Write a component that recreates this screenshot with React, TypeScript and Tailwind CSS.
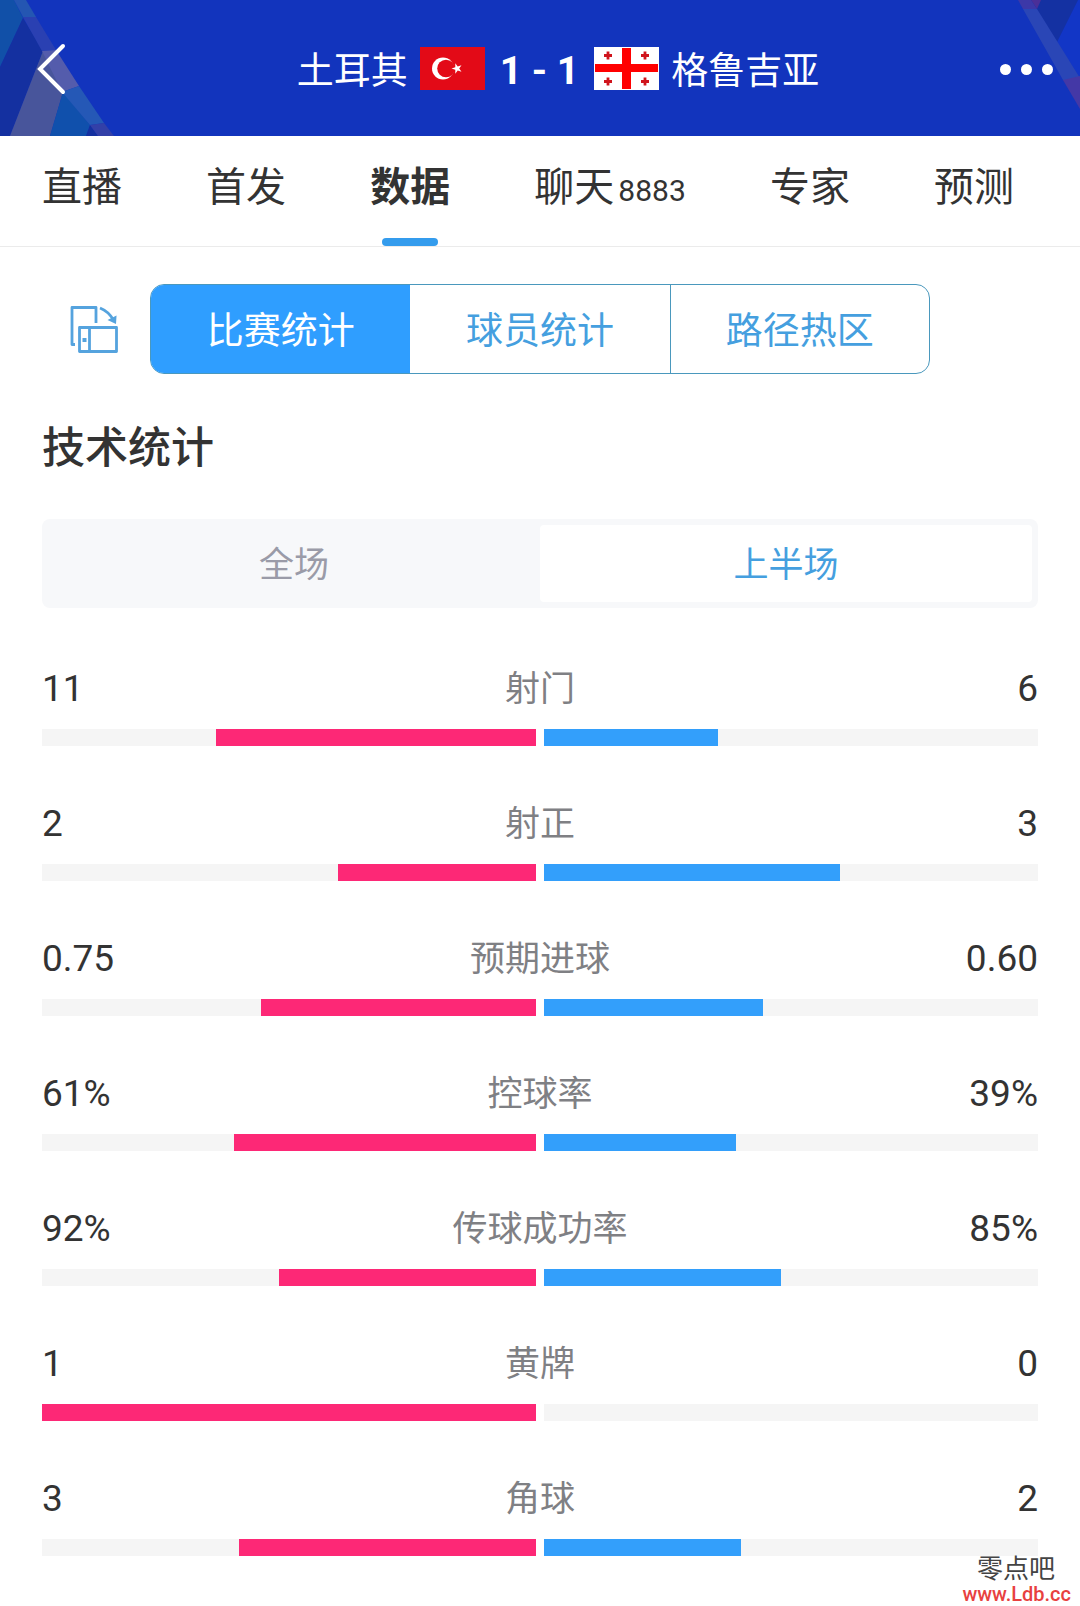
const tabs = [
  { label: "直播" },
  { label: "首发" },
  { label: "数据", active: true },
  { label: "聊天", count: "8883" },
  { label: "专家" },
  { label: "预测" },
];

const stats = [
  { label: "射门", home: "11", away: "6", homeShare: 64.7, awayShare: 35.3 },
  { label: "射正", home: "2", away: "3", homeShare: 40, awayShare: 60 },
  { label: "预期进球", home: "0.75", away: "0.60", homeShare: 55.6, awayShare: 44.4 },
  { label: "控球率", home: "61%", away: "39%", homeShare: 61.1, awayShare: 38.9 },
  { label: "传球成功率", home: "92%", away: "85%", homeShare: 52, awayShare: 48 },
  { label: "黄牌", home: "1", away: "0", homeShare: 100, awayShare: 0 },
  { label: "角球", home: "3", away: "2", homeShare: 60.2, awayShare: 39.8 },
];

function HeaderArtLeft() {
  return (
    <svg className="absolute left-0 top-0" width="116" height="136" viewBox="0 0 116 136" aria-hidden="true">
      <path d="M0 0H14L23 18L0 67Z" fill="#1150a8" />
      <path d="M23 18L43 51L10 136H0V67Z" fill="#1430a0" />
      <path d="M43 51L63 92L50 136H10Z" fill="#48559b" />
      <path d="M63 92L90 125L86 136H50Z" fill="#1050ac" />
      <path d="M90 125L98 136H86Z" fill="#1430a0" />
      <path d="M14 0H26L36 17H23Z" fill="#2456b2" />
      <path d="M23 17H36L56 50L42 51Z" fill="#2a40b2" />
      <path d="M42 51L56 50L79 86L62 92Z" fill="#545cac" />
      <path d="M62 92L79 86L104 123L90 125Z" fill="#2558b6" />
      <path d="M90 125L104 123L114 136H98Z" fill="#3340a8" />
    </svg>
  );
}

function HeaderArtRight() {
  return (
    <svg className="absolute right-0 top-0" width="64" height="136" viewBox="0 0 64 136" aria-hidden="true">
      <path d="M62 0H64V78L41 42Z" fill="#1236c6" />
      <path d="M15 0H62L41 42Z" fill="#1431a2" />
      <path d="M15 0H25L21 9Z" fill="#4a2f98" />
      <path d="M2 0H15L21 9H7Z" fill="#3c38a8" />
      <path d="M7 9H21L64 78L53 80L47 80Z" fill="#2a46b6" />
      <path d="M47 80L64 76V109Z" fill="#4438a6" />
    </svg>
  );
}

function TurkeyFlag() {
  return (
    <svg width="65" height="43" viewBox="0 0 65 43" role="img" aria-label="土耳其">
      <rect width="65" height="43" fill="#e30a17" />
      <circle cx="23" cy="21.500" r="11" fill="#fff" />
      <circle cx="26" cy="21.500" r="8.800" fill="#e30a17" />
      <path d="M31.500 21.500L35.300 20.200L35.300 16.200L37.700 19.400L41.500 18.200L39.200 21.500L41.500 24.800L37.700 23.600L35.300 26.800L35.300 22.800Z" fill="#fff" />
    </svg>
  );
}

function GeorgiaFlag() {
  return (
    <svg width="65" height="43" viewBox="0 0 65 43" role="img" aria-label="格鲁吉亚">
      <rect width="65" height="43" fill="#fff" />
      <path d="M28 1H37V17H64V25H37V42H28V25H1V17H28Z" fill="#ff0000" />
      <path
        d="M10 8.500H18M14 4.500V12.500M47 8.500H55M51 4.500V12.500M10 34.500H18M14 30.500V38.500M47 34.500H55M51 30.500V38.500"
        stroke="#d0141c"
        strokeWidth="2.800"
      />
    </svg>
  );
}

function RotateIcon() {
  return (
    <svg width="50" height="50" viewBox="0 0 50 50" fill="none" stroke="#55a3de" strokeWidth="2.800" strokeLinejoin="round" aria-hidden="true">
      <path d="M6 40.500H3V3.500H27V19" />
      <rect x="10.500" y="23.500" width="37" height="24" />
      <path d="M20.500 23.500V47.500" />
      <path d="M31 4C36 6 41 10 44.500 16" />
      <path d="M38.500 16L47 20L47.500 11.500Z" fill="#55a3de" stroke="none" />
      <rect x="13.500" y="34" width="4" height="4" fill="#55a3de" stroke="none" />
    </svg>
  );
}

export default function App() {
  return (
    <div className="relative min-h-screen overflow-hidden bg-white pb-12 font-['Roboto','Noto_Sans_CJK_SC',sans-serif] text-[#333333]">
      <header className="relative flex h-[136px] items-center justify-between bg-[#1234bd] px-[27px] pt-[2px] text-white">
        <HeaderArtLeft />
        <HeaderArtRight />
        <button type="button" aria-label="返回" className="relative flex w-[60px] justify-start pl-[9px]">
          <svg width="32" height="54" viewBox="0 0 32 54" fill="none" stroke="#fff" strokeWidth="4" strokeLinecap="round">
            <path d="M27 4L4 27L27 50" />
          </svg>
        </button>
        <h1 className="relative flex items-center whitespace-nowrap pl-[36px] text-[37px] leading-[54px]">
          <span className="pt-[6px]">土耳其</span>
          <span className="ml-3 pb-[2px]"><TurkeyFlag /></span>
          <span className="mx-[15px] pt-[4px] text-[39px] font-bold">1 - 1</span>
          <span className="pb-[2px]"><GeorgiaFlag /></span>
          <span className="ml-3 pt-[6px]">格鲁吉亚</span>
        </h1>
        <button type="button" aria-label="更多" className="relative flex w-[60px] items-center justify-end gap-[10px]">
          <span className="size-[11px] shrink-0 rounded-full bg-white" />
          <span className="size-[11px] shrink-0 rounded-full bg-white" />
          <span className="size-[11px] shrink-0 rounded-full bg-white" />
        </button>
      </header>

      <nav className="flex h-[111px] justify-between border-b border-[#ebebeb] pl-[42px] pr-[66px]">
        {tabs.map((tab) => (
          <a
            key={tab.label}
            href="#"
            aria-current={tab.active ? "page" : undefined}
            className={
              tab.active
                ? "flex flex-col items-center justify-between pt-[23px] text-[40px] font-bold leading-[58px]"
                : "pt-[23px] text-[40px] leading-[58px]"
            }
          >
            <span>
              {tab.label}
              {tab.count && <span className="ml-1 text-[30px]">{tab.count}</span>}
            </span>
            {tab.active && <span className="h-2 w-14 rounded-full bg-[#349ced]" />}
          </a>
        ))}
      </nav>

      <main className="px-[42px]">
        <div className="mt-[37px] flex items-center">
          <button type="button" aria-label="横屏" className="ml-[27px] mr-[31px]">
            <RotateIcon />
          </button>
          <div className="mr-[108px] grid h-[90px] flex-1 grid-cols-3 overflow-hidden rounded-[14px] border border-[#4a98bd] text-[37px] text-[#459fdf]">
            <button type="button" className="bg-[#2f9eff] pt-[6px] text-white">比赛统计</button>
            <button type="button" className="pt-[6px]">球员统计</button>
            <button type="button" className="border-l border-[#4a98bd] pt-[6px]">路径热区</button>
          </div>
        </div>

        <h2 className="mt-[42px] text-[43px] font-medium leading-[64px]">技术统计</h2>

        <div className="mt-[39px] grid h-[89px] grid-cols-2 rounded-lg bg-[#f7f8fa] p-[6px] text-[35px]">
          <button type="button" className="pt-[6px] text-[#9a9ba8]">全场</button>
          <button type="button" className="rounded bg-white pt-[6px] text-[#459fdf]">上半场</button>
        </div>

        <section className="mt-[55px] flex flex-col gap-[52px]">
          {stats.map((stat) => (
            <div key={stat.label}>
              <div className="grid h-[52px] grid-cols-3 items-center text-[37px] leading-[48px] [font-kerning:none]">
                <span>{stat.home}</span>
                <span className="pt-[2px] text-center text-[35px] text-[#7f8084]">{stat.label}</span>
                <span className="text-right">{stat.away}</span>
              </div>
              <div className="mt-[14px] grid grid-cols-2 gap-2">
                <div className="flex h-[17px] justify-end bg-[#f5f5f5]">
                  <div className="bg-[#fd2876]" style={{ width: `${stat.homeShare}%` }} />
                </div>
                <div className="flex h-[17px] bg-[#f5f5f5]">
                  <div className="bg-[#339ffb]" style={{ width: `${stat.awayShare}%` }} />
                </div>
              </div>
            </div>
          ))}
        </section>
      </main>

      <div className="absolute bottom-0 right-[9px] text-right">
        <p className="pr-4 text-[26px] leading-[26px] text-[#444444]">零点吧</p>
        <p className="text-[20px] font-medium leading-[24px] text-[#e8413f]">www.Ldb.cc</p>
      </div>
    </div>
  );
}
